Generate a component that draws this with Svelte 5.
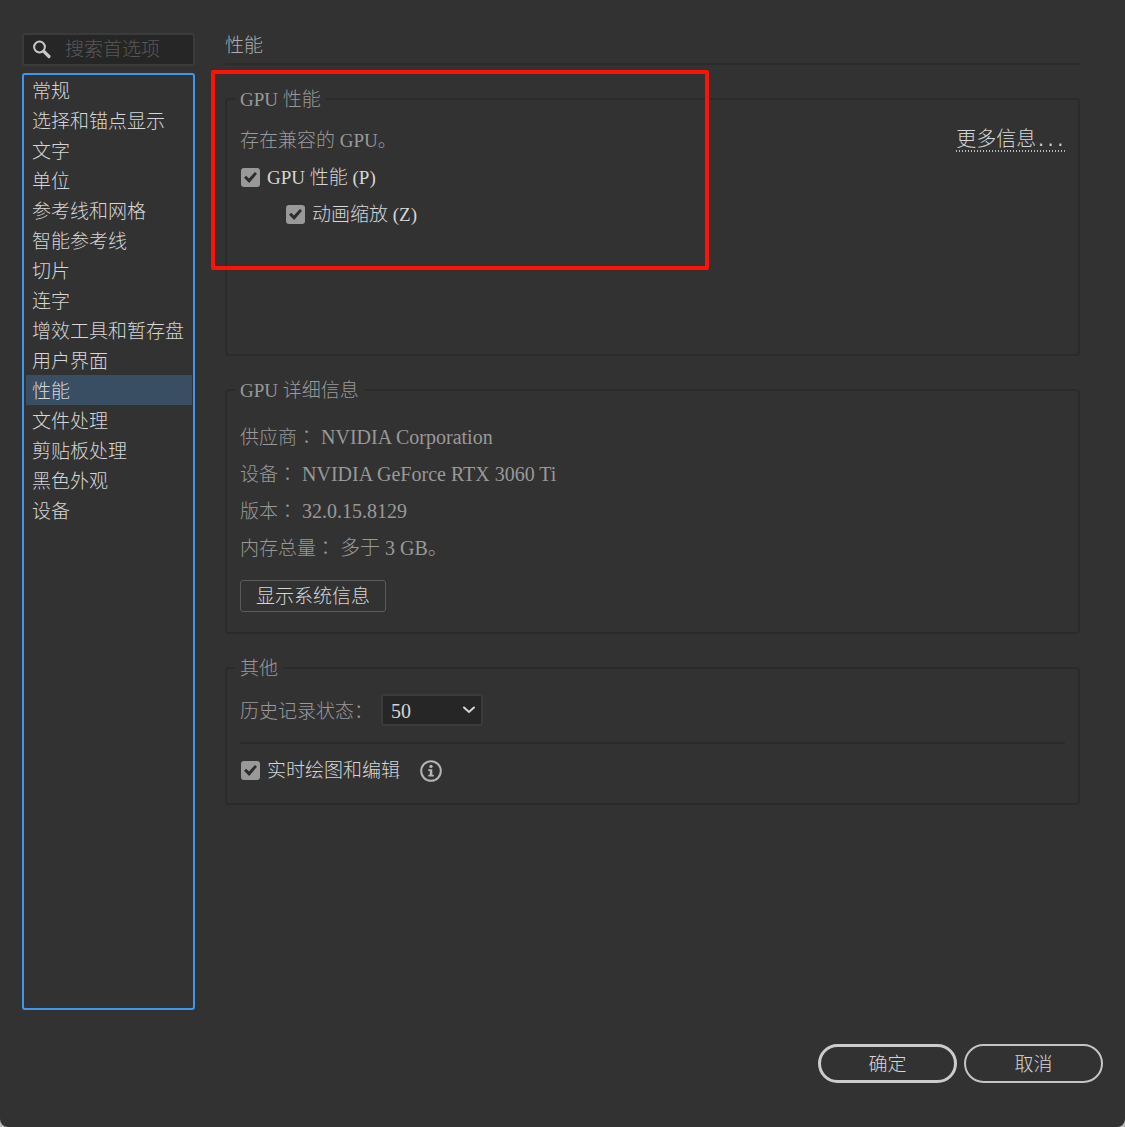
<script lang="ts">
  const sections = [
    "常规",
    "选择和锚点显示",
    "文字",
    "单位",
    "参考线和网格",
    "智能参考线",
    "切片",
    "连字",
    "增效工具和暂存盘",
    "用户界面",
    "性能",
    "文件处理",
    "剪贴板处理",
    "黑色外观",
    "设备",
  ];

  const gpuDetails = [
    { label: "供应商", value: "NVIDIA Corporation" },
    { label: "设备", value: "NVIDIA GeForce RTX 3060 Ti" },
    { label: "版本", value: "32.0.15.8129" },
    { label: "内存总量", value: "多于 3 GB。" },
  ];

  let query = $state("");
  let selected = $state("性能");
  let gpuEnabled = $state(true);
  let animatedZoom = $state(true);
  let realtimeDrawing = $state(true);
  let historyStates = $state("50");
</script>

<div class="dialog">
  <div class="body">
    <aside class="sidebar">
      <label class="search">
        <svg viewBox="0 0 20 20" aria-hidden="true">
          <circle cx="7.5" cy="7" r="5.4" fill="none" stroke="currentColor" stroke-width="2" />
          <path d="M11.8 11.3 17 16.5" stroke="currentColor" stroke-width="3.2" stroke-linecap="round" />
        </svg>
        <input type="text" placeholder="搜索首选项" aria-label="搜索首选项" bind:value={query} />
      </label>
      <ul class="sections">
        {#each sections as section (section)}
          <li>
            <button
              type="button"
              class:selected={section === selected}
              onclick={() => (selected = section)}
            >
              {section}
            </button>
          </li>
        {/each}
      </ul>
    </aside>

    <main class="content">
      <h1>性能</h1>

      <fieldset class="gpu">
        <legend>GPU 性能</legend>
        <div class="row split">
          <span>存在兼容的 GPU。</span>
          <a class="more" href="#more">更多信息<span class="dots">...</span></a>
        </div>
        <label class="row check">
          <input type="checkbox" bind:checked={gpuEnabled} />
          GPU 性能 (P)
        </label>
        <label class="row check nested">
          <input type="checkbox" bind:checked={animatedZoom} />
          动画缩放 (Z)
        </label>
        <div class="highlight"></div>
      </fieldset>

      <fieldset class="details">
        <legend>GPU 详细信息</legend>
        <dl>
          {#each gpuDetails as detail (detail.label)}
            <div class="row">
              <dt>{detail.label}<span class="colon">：</span></dt>
              <dd>{detail.value}</dd>
            </div>
          {/each}
        </dl>
        <button type="button" class="system-info">显示系统信息</button>
      </fieldset>

      <fieldset class="other">
        <legend>其他</legend>
        <div class="history">
          <label for="history-states">历史记录状态：</label>
          <div class="select">
            <select id="history-states" bind:value={historyStates}>
              <option>50</option>
              <option>100</option>
              <option>200</option>
            </select>
            <svg viewBox="0 0 14 8" aria-hidden="true">
              <path d="M2 1.5 7 6l5-4.5" fill="none" stroke="currentColor" stroke-width="2" stroke-linecap="round" />
            </svg>
          </div>
        </div>
        <hr />
        <div class="row realtime">
          <label class="check">
            <input type="checkbox" bind:checked={realtimeDrawing} />
            实时绘图和编辑
          </label>
          <svg class="info" viewBox="0 0 22 22" aria-hidden="true">
            <circle cx="11" cy="11" r="9.8" fill="none" stroke="currentColor" stroke-width="2" />
            <circle cx="11" cy="6.4" r="1.7" fill="currentColor" />
            <path d="M8.3 9.2h4v5.6h1.5v1.8H8.3v-1.8h1.5V11H8.3z" fill="currentColor" />
          </svg>
        </div>
      </fieldset>
    </main>
  </div>

  <footer>
    <button type="button" class="primary">确定</button>
    <button type="button">取消</button>
  </footer>
</div>

<style>
  :global(body) {
    margin: 0;
    background: #b8b8b8;
  }

  .dialog {
    --text: #d6d6d6;
    --muted: #999;
    --line: #2b2b2b;
    box-sizing: border-box;
    display: flex;
    flex-direction: column;
    gap: 34px;
    min-height: 100vh;
    padding: 33px 22px 44px;
    border-radius: 0 0 8px 8px;
    background: #323232;
    color: var(--text);
    font-family: "Liberation Serif", "Noto Sans CJK SC", serif;
    font-size: 19px;
    font-weight: 300;
    line-height: 24px;
  }

  button,
  input,
  select {
    margin: 0;
    color: inherit;
    font: inherit;
  }

  .body {
    display: flex;
    flex: 1;
    gap: 30px;
    padding-right: 23px;
  }

  .sidebar {
    display: flex;
    flex-direction: column;
    flex: none;
    gap: 7px;
    width: 173px;
  }

  .search {
    box-sizing: border-box;
    display: flex;
    align-items: center;
    gap: 13px;
    height: 33px;
    padding: 0 8px;
    border: 2px solid #3b3b3b;
    border-radius: 3px;
    background: #262626;
  }

  .search svg {
    flex: none;
    width: 20px;
    height: 20px;
    color: #c8c8c8;
  }

  .search input {
    min-width: 0;
    width: 100%;
    padding: 0;
    border: 0;
    outline: 0;
    background: none;
  }

  .search input::placeholder {
    color: #585858;
    opacity: 1;
  }

  .sections {
    flex: 1;
    margin: 0;
    padding: 0 1px 0 2px;
    border: 2px solid #3f96ec;
    border-radius: 3px;
    list-style: none;
  }

  .sections button {
    display: block;
    width: 100%;
    height: 30px;
    padding: 3px 6px 0;
    border: 0;
    background: none;
    text-align: left;
    white-space: nowrap;
  }

  .sections .selected {
    background: #394e63;
  }

  .content {
    display: flex;
    flex-direction: column;
    flex: 1;
    gap: 21px;
    min-width: 0;
  }

  h1 {
    margin: 0;
    padding: 1px 0 5px;
    border-bottom: 2px solid var(--line);
    color: #adadad;
    font: inherit;
  }

  fieldset {
    position: relative;
    min-width: 0;
    margin: 0;
    padding: 0 13px;
    border: 2px solid var(--line);
    border-radius: 4px;
    color: var(--muted);
  }

  legend {
    margin-left: -5px;
    padding: 2px 5px 0;
  }

  .gpu {
    padding-top: 10px;
    padding-bottom: 121px;
  }

  .details {
    padding-top: 15px;
    padding-bottom: 20px;
  }

  .other {
    padding-top: 13px;
    padding-bottom: 14px;
  }

  .row {
    display: flex;
    align-items: center;
    height: 37px;
  }

  .split {
    justify-content: space-between;
  }

  .more {
    background: repeating-linear-gradient(to right, #bbb 0 1px, transparent 1px 3px) bottom / 100% 2px no-repeat;
    color: var(--text);
    font-size: 20px;
    line-height: 20px;
    text-decoration: none;
  }

  .dots {
    font-family: "Liberation Mono", monospace;
    font-size: 16px;
  }

  .check {
    display: flex;
    align-items: center;
    gap: 7px;
    padding-left: 1px;
    color: var(--text);
  }

  .nested {
    padding-left: 46px;
  }

  .check input {
    display: grid;
    place-items: center;
    flex: none;
    width: 19px;
    height: 19px;
    border-radius: 3px;
    background: #999;
    appearance: none;
  }

  .check input:checked::before {
    width: 13px;
    height: 11px;
    background: #2c2c2c;
    clip-path: polygon(0 52%, 16% 35%, 38% 60%, 84% 0, 100% 16%, 40% 100%);
    content: "";
  }

  .highlight {
    position: absolute;
    top: -42px;
    left: -16px;
    box-sizing: border-box;
    width: 498px;
    height: 200px;
    margin-top: 0;
    border: 4px solid #ff1205;
    border-radius: 2px;
    pointer-events: none;
  }

  dl,
  dd {
    margin: 0;
  }

  dd {
    font-size: 20px;
  }

  .colon {
    margin-right: 5px;
    font-family: "Noto Sans CJK TC", sans-serif;
  }

  .system-info {
    display: block;
    height: 32px;
    margin-top: 14px;
    padding: 2px 15px 0;
    border: 1px solid #5a5a5a;
    border-radius: 3px;
    background: none;
    color: var(--text);
  }

  .history {
    display: flex;
    align-items: center;
    gap: 8px;
  }

  .history label {
    padding-top: 3px;
  }

  .select {
    display: grid;
    align-items: center;
    width: 102px;
    color: var(--text);
  }

  .select select,
  .select svg {
    grid-area: 1 / 1;
  }

  .select select {
    width: 100%;
    height: 32px;
    padding: 2px 8px 0;
    border: 2px solid #3b3b3b;
    border-radius: 3px;
    background: #262626;
    font-size: 20px;
    appearance: none;
  }

  .select svg {
    justify-self: end;
    width: 14px;
    height: 8px;
    margin-right: 7px;
    pointer-events: none;
  }

  hr {
    height: 2px;
    margin: 16px 0 8px;
    border: 0;
    background: var(--line);
  }

  .realtime {
    gap: 20px;
  }

  .info {
    width: 22px;
    height: 22px;
    color: #b4b4b4;
  }

  footer {
    display: flex;
    justify-content: flex-end;
    gap: 7px;
  }

  footer button {
    width: 139px;
    height: 39px;
    padding: 2px 0 0;
    border: 2px solid #c4c4c4;
    border-radius: 20px;
    background: none;
  }

  footer .primary {
    border: 3px solid #ccc;
  }
</style>
